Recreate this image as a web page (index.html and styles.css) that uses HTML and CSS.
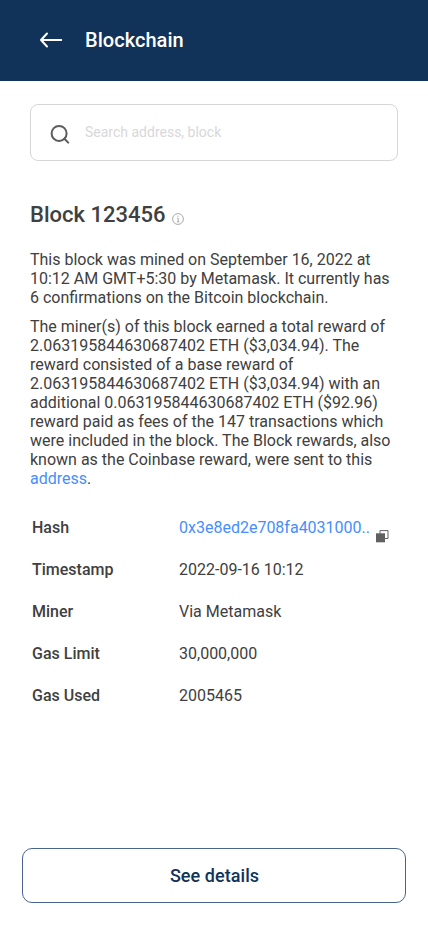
FILE: index.html
```html
<!DOCTYPE html>
<html lang="en">
<head>
<meta charset="utf-8">
<title>Blockchain</title>
<link rel="stylesheet" href="styles.css">
</head>
<body>
<header class="topbar">
  <svg class="back" width="24" height="16" viewBox="0 0 24 16"><path d="M22.2 8H2M8 1.5L2 8l6 6.5"/></svg>
  <h1>Blockchain</h1>
</header>
<main>
  <div class="search">
    <svg width="22" height="22" viewBox="0 0 22 22"><circle cx="10.1" cy="10.4" r="7.5"/><path d="M15.4 15.7L19.2 19.6"/></svg>
    <span>Search address, block</span>
  </div>
  <div class="title">
    <h2>Block 123456</h2>
    <svg width="12" height="12" viewBox="0 0 12 12"><circle cx="6" cy="6" r="5.4"/><path d="M5 5.2H6.2V8.8M4.9 8.8H7.4M6 2.8V3.9"/></svg>
  </div>
  <p>This block was mined on September 16, 2022 at<br>10:12 AM GMT+5:30 by Metamask. It currently has<br>6 confirmations on the Bitcoin blockchain.</p>
  <p>The miner(s) of this block earned a total reward of<br>2.063195844630687402 ETH ($3,034.94). The<br>reward consisted of a base reward of<br>2.063195844630687402 ETH ($3,034.94) with an<br>additional 0.063195844630687402 ETH ($92.96)<br>reward paid as fees of the 147 transactions which<br>were included in the block. The Block rewards, also<br>known as the Coinbase reward, were sent to this<br><a>address</a>.</p>
  <dl>
    <dt>Hash</dt><dd class="hash"><a>0x3e8ed2e708fa4031000..</a><svg width="13" height="13" viewBox="0 0 13 13"><path class="outline" d="M4 .6H12V8.5H4Z"/><path class="solid" d="M0 3.3H9V12.3H0Z"/></svg></dd>
    <dt>Timestamp</dt><dd>2022-09-16 10:12</dd>
    <dt>Miner</dt><dd>Via Metamask</dd>
    <dt>Gas Limit</dt><dd>30,000,000</dd>
    <dt>Gas Used</dt><dd>2005465</dd>
  </dl>
</main>
<button class="details">See details</button>
</body>
</html>
```
FILE: styles.css
```css
* { box-sizing: border-box; }
body {
  margin: 0;
  height: 942px;
  display: flex;
  flex-direction: column;
  background: #fff;
  color: #404040;
  font-family: Roboto, sans-serif;
  font-size: 16px;
  line-height: 19px;
}
h1, h2, p, dl, dd { margin: 0; }
svg { fill: none; flex: none; }
a { color: #468eff; }
.topbar {
  height: 81px;
  padding: 0 0 1px 39px;
  display: flex;
  align-items: center;
  gap: 22px;
  background: #113359;
  color: #fff;
}
.back { stroke: #fff; stroke-width: 2; stroke-linecap: round; stroke-linejoin: round; }
h1 { font-size: 20px; font-weight: 500; line-height: 24px; letter-spacing: .04px; }
main { padding: 23px 30px 0; flex: 1; }
.search {
  height: 57px;
  padding-left: 18px;
  display: flex;
  align-items: center;
  gap: 14px;
  border: 1px solid #d6d6d6;
  border-radius: 8px;
  color: #d8d8d8;
  font-size: 14px;
}
.search svg { margin-top: 3px; stroke: #5c5c5c; stroke-width: 2; stroke-linecap: round; }
.title { display: flex; align-items: flex-end; gap: 7px; margin: 41px 0 22px; }
h2 { font-size: 22px; font-weight: 500; line-height: 26px; }
.title svg { margin-bottom: 3px; stroke: #a0a0a0; stroke-width: .9; }
p { margin-bottom: 10px; white-space: nowrap; }
dl {
  margin: 30px 0 0 2px;
  display: grid;
  grid-template-columns: 147px 1fr;
  row-gap: 23px;
}
dt { font-weight: 500; }
.hash { display: flex; gap: 6px; height: 19px; }
.hash svg { margin-top: 12px; }
.outline { stroke: #606060; }
.solid { fill: #606060; }
.details {
  height: 55px;
  margin: 0 22px 39px;
  padding: 0 5px 0 6px;
  border: 1px solid #48648a;
  border-radius: 10px;
  background: #fff;
  color: #113359;
  font: 500 18px/22px Roboto, sans-serif;
  letter-spacing: .06px;
}
```
